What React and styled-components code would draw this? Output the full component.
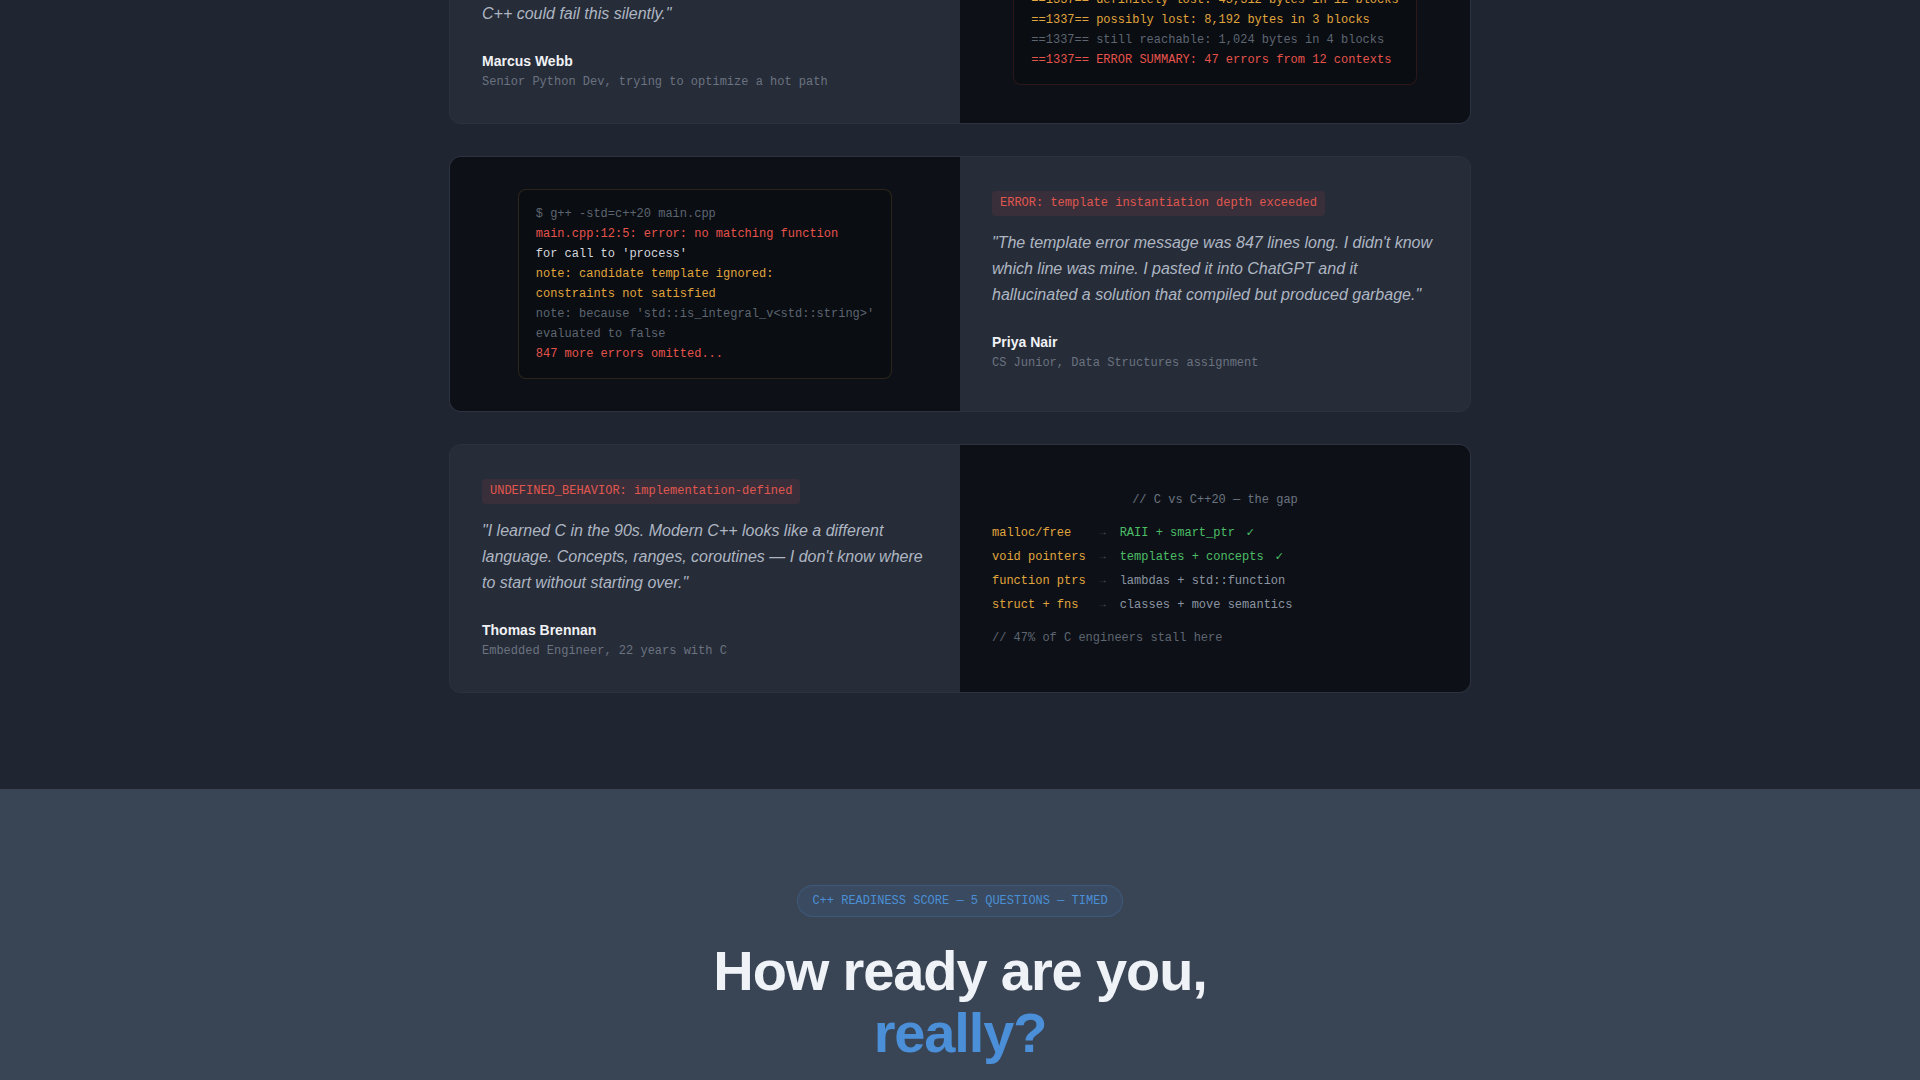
import styled, { createGlobalStyle } from "styled-components";

const mono = `"Liberation Mono", "DejaVu Sans Mono", monospace`;
const sans = `"Liberation Sans", Arial, sans-serif`;

const tones = {
  dim: "#5d6571",
  muted: "#6b7380",
  plain: "#d3d7de",
  soft: "#8c95a2",
  amber: "#e0a53d",
  red: "#e5534b",
  green: "#4cbd66",
};

const GlobalStyle = createGlobalStyle`
  html, body {
    margin: 0;
    padding: 0;
    background: #1f2531;
  }
  * { box-sizing: border-box; }
`;

const StoriesSection = styled.section`
  display: flow-root;
  background: #1f2531;
  padding-bottom: 96px;
`;

const CardList = styled.div`
  max-width: 1022px;
  margin: -125px auto 0;
  display: flex;
  flex-direction: column;
  gap: 32px;
`;

const Card = styled.article`
  display: grid;
  grid-template-columns: 1fr 1fr;
  border-radius: 12px;
  overflow: hidden;
  border: 1px solid rgba(255, 255, 255, 0.03);
  background: #262c38;
`;

const TextSide = styled.div`
  background: #262c38;
  padding: 34px 32px 32px;
`;

const Tag = styled.span`
  display: inline-block;
  font-family: ${mono};
  font-size: 12px;
  line-height: 17px;
  padding: 4px 8px;
  border-radius: 4px;
  color: #e0574f;
  background: rgba(229, 83, 75, 0.1);
  margin-bottom: 14px;
`;

const Quote = styled.p`
  margin: 0 0 24px;
  font-family: ${sans};
  font-style: italic;
  font-size: 16px;
  line-height: 26px;
  color: #aeb6c2;
`;

const Name = styled.div`
  font-family: ${sans};
  font-weight: 700;
  font-size: 14px;
  line-height: 20px;
  color: #f0f2f5;
  margin-bottom: 2px;
`;

const Role = styled.div`
  font-family: ${mono};
  font-size: 12px;
  line-height: 18px;
  color: ${tones.muted};
`;

const CodeSide = styled.div`
  background: #0d1117;
  display: flex;
  align-items: center;
  justify-content: center;
  padding: 32px;
`;

const Terminal = styled.div`
  background: #0a0d12;
  border: 1px solid ${(p) => p.$edge};
  border-radius: 8px;
  padding: 14px 17px;
  font-family: ${mono};
  font-size: 12px;
  line-height: 20px;
  white-space: pre;
`;

const Line = styled.div`
  color: ${(p) => tones[p.$tone]};
`;

const ComparePanel = styled.div`
  background: #0d1117;
  display: flex;
  flex-direction: column;
  justify-content: center;
  padding: 32px;
  font-family: ${mono};
  font-size: 12px;
`;

const CompareTitle = styled.div`
  text-align: center;
  line-height: 18px;
  color: ${tones.muted};
  margin-bottom: 12px;
`;

const CompareGrid = styled.div`
  display: grid;
  grid-template-columns: max-content max-content 1fr;
  column-gap: 14px;
  line-height: 24px;
  white-space: pre;
`;

const OldWay = styled.span`
  color: ${tones.amber};
`;

const Arrow = styled.span`
  font-size: 10px;
  color: #4a515d;
`;

const NewWay = styled.span`
  color: ${(p) => (p.$good ? tones.green : tones.soft)};
`;

const Check = styled.span`
  margin-left: 11px;
  font-family: "DejaVu Sans", sans-serif;
  font-size: 11px;
`;

const CompareNote = styled.div`
  margin-top: 12px;
  line-height: 18px;
  color: ${tones.dim};
`;

const QuizSection = styled.section`
  background: #394455;
  padding: 96px 24px 120px;
  text-align: center;
`;

const Badge = styled.span`
  display: inline-block;
  font-family: ${mono};
  font-size: 12px;
  line-height: 18px;
  padding: 6px 14px;
  border-radius: 999px;
  color: #4a8fd6;
  background: rgba(74, 143, 214, 0.09);
  border: 1px solid rgba(74, 143, 214, 0.22);
`;

const Heading = styled.h2`
  margin: 23px 0 0;
  font-family: ${sans};
  font-weight: 700;
  font-size: 56px;
  line-height: 1.1;
  letter-spacing: -0.02em;
  color: #eff2f6;
`;

const Accent = styled.span`
  color: #4a8fd8;
`;

const valgrind = [
  ["dim", "$ valgrind --leak-check=full ./hotpath"],
  ["red", "==1337== Invalid write of size 8"],
  ["muted", "==1337==    at 0x4011A2: process (ext.cpp:42)"],
  ["amber", "==1337== definitely lost: 45,312 bytes in 12 blocks"],
  ["amber", "==1337== possibly lost: 8,192 bytes in 3 blocks"],
  ["dim", "==1337== still reachable: 1,024 bytes in 4 blocks"],
  ["red", "==1337== ERROR SUMMARY: 47 errors from 12 contexts"],
];

const compiler = [
  ["dim", "$ g++ -std=c++20 main.cpp"],
  ["red", "main.cpp:12:5: error: no matching function"],
  ["plain", "for call to 'process'"],
  ["amber", "note: candidate template ignored:"],
  ["amber", "constraints not satisfied"],
  ["dim", "note: because 'std::is_integral_v<std::string>'"],
  ["dim", "evaluated to false"],
  ["red", "847 more errors omitted..."],
];

const gap = [
  ["malloc/free", "RAII + smart_ptr", true],
  ["void pointers", "templates + concepts", true],
  ["function ptrs", "lambdas + std::function", false],
  ["struct + fns", "classes + move semantics", false],
];

const Story = ({ tag, quote, name, role }) => (
  <TextSide>
    <Tag>{tag}</Tag>
    <Quote>{quote}</Quote>
    <Name>{name}</Name>
    <Role>{role}</Role>
  </TextSide>
);

const Output = ({ lines, edge }) => (
  <CodeSide>
    <Terminal $edge={edge}>
      {lines.map(([tone, text], i) => (
        <Line key={i} $tone={tone}>
          {text}
        </Line>
      ))}
    </Terminal>
  </CodeSide>
);

export default function App() {
  return (
    <>
      <GlobalStyle />
      <StoriesSection>
        <CardList>
          <Card>
            <Story
              tag="SEGFAULT: core dumped (signal 11)"
              quote={
                <>
                  "I wrote a C++ extension to speed up one loop. It ran 40x
                  <br />
                  faster and leaked memory for a week. I had no idea
                  <br />
                  C++ could fail this silently."
                </>
              }
              name="Marcus Webb"
              role="Senior Python Dev, trying to optimize a hot path"
            />
            <Output lines={valgrind} edge="rgba(229, 83, 75, 0.16)" />
          </Card>

          <Card>
            <Output lines={compiler} edge="rgba(224, 165, 61, 0.16)" />
            <Story
              tag="ERROR: template instantiation depth exceeded"
              quote={`"The template error message was 847 lines long. I didn't know which line was mine. I pasted it into ChatGPT and it hallucinated a solution that compiled but produced garbage."`}
              name="Priya Nair"
              role="CS Junior, Data Structures assignment"
            />
          </Card>

          <Card>
            <Story
              tag="UNDEFINED_BEHAVIOR: implementation-defined"
              quote={`"I learned C in the 90s. Modern C++ looks like a different language. Concepts, ranges, coroutines — I don't know where to start without starting over."`}
              name="Thomas Brennan"
              role="Embedded Engineer, 22 years with C"
            />
            <ComparePanel>
              <CompareTitle>// C vs C++20 — the gap</CompareTitle>
              <CompareGrid>
                {gap.map(([from, to, good]) => (
                  <>
                    <OldWay key={from}>{from}</OldWay>
                    <Arrow>→</Arrow>
                    <NewWay $good={good}>
                      {to}
                      {good && <Check>✓</Check>}
                    </NewWay>
                  </>
                ))}
              </CompareGrid>
              <CompareNote>// 47% of C engineers stall here</CompareNote>
            </ComparePanel>
          </Card>
        </CardList>
      </StoriesSection>

      <QuizSection>
        <Badge>C++ READINESS SCORE — 5 QUESTIONS — TIMED</Badge>
        <Heading>
          How ready are you,
          <br />
          <Accent>really?</Accent>
        </Heading>
      </QuizSection>
    </>
  );
}
